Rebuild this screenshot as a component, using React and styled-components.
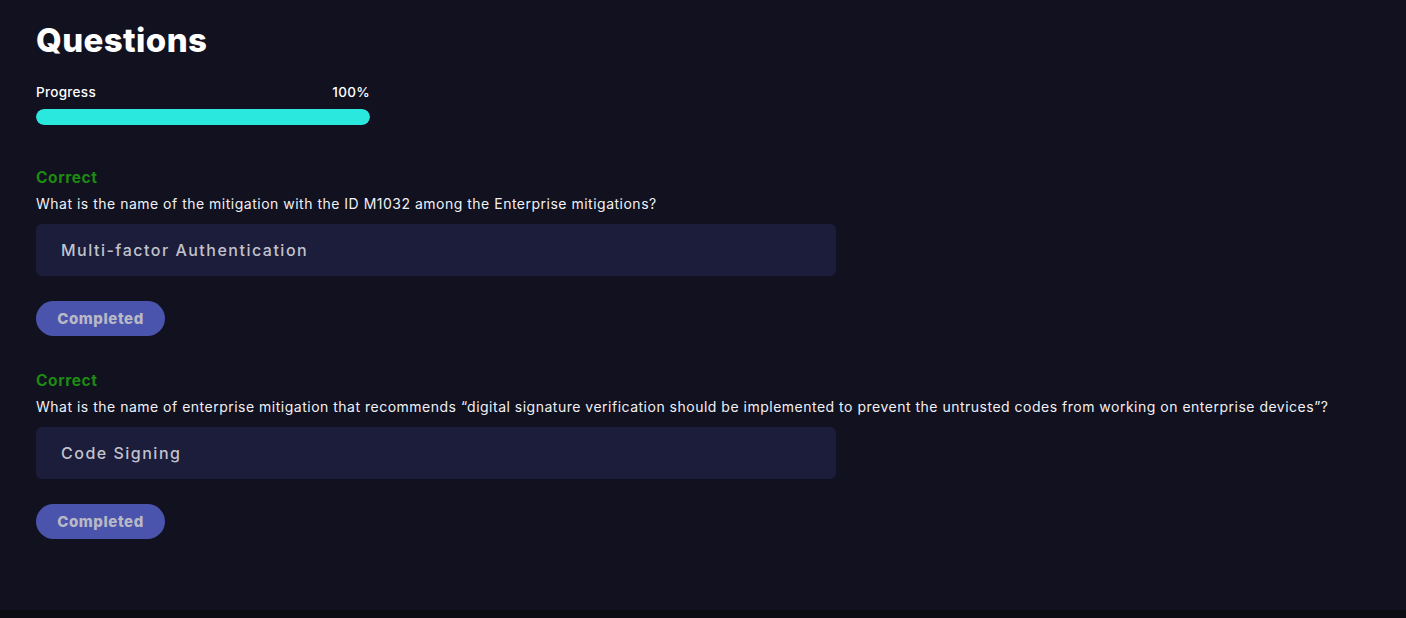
import React from "react";
import styled, { createGlobalStyle } from "styled-components";

const GlobalStyle = createGlobalStyle`
  html, body {
    margin: 0;
    padding: 0;
    background: #0c0c14;
  }
  body {
    font-family: "Inter", "DejaVu Sans", sans-serif;
  }
`;

const Page = styled.div`
  height: 610px;
  background: #11111f;
  padding: 20px 36px 0;
  box-sizing: border-box;
`;

const Title = styled.h1`
  margin: 0;
  font-size: 33px;
  font-weight: 800;
  color: #ffffff;
  line-height: 40px;
  letter-spacing: 0.4px;
`;

const ProgressBlock = styled.div`
  width: 334px;
  margin-top: 23px;
`;

const ProgressHead = styled.div`
  display: flex;
  justify-content: space-between;
  font-size: 13.5px;
  font-weight: 500;
  color: #ffffff;
  line-height: 18px;
  letter-spacing: 0.3px;
`;

const Track = styled.div`
  margin-top: 8px;
  height: 16px;
  border-radius: 8px;
  background: #2a2a40;
  overflow: hidden;
`;

const Fill = styled.div`
  height: 100%;
  background: #2ae8de;
  border-radius: 8px;
`;

const Question = styled.section`
  margin-top: ${(p) => (p.first ? "43px" : "35px")};
`;

const Status = styled.div`
  font-size: 15.5px;
  font-weight: 700;
  color: #1d8a12;
  line-height: 20px;
  letter-spacing: 0.6px;
`;

const Prompt = styled.p`
  margin: 7px 0 0;
  font-size: 14px;
  color: #f0f0f4;
  line-height: 18px;
  letter-spacing: 0.5px;
`;

const Answer = styled.div`
  margin-top: 11px;
  width: 800px;
  height: 52px;
  box-sizing: border-box;
  display: flex;
  align-items: center;
  padding-left: 25px;
  background: #1b1d3b;
  border-radius: 6px;
  font-size: 16px;
  font-weight: 500;
  letter-spacing: 1.5px;
  color: #c2c2cc;
`;

const Done = styled.button`
  margin-top: 25px;
  width: 129px;
  height: 35px;
  border: none;
  border-radius: 18px;
  background: #4a54ad;
  color: #b9b9c6;
  font-family: inherit;
  font-size: 15px;
  font-weight: 800;
  letter-spacing: 0.6px;
  padding: 0;
`;

const questions = [
  {
    text: "What is the name of the mitigation with the ID M1032 among the Enterprise mitigations?",
    answer: "Multi-factor Authentication",
  },
  {
    text: "What is the name of enterprise mitigation that recommends \u201cdigital signature verification should be implemented to prevent the untrusted codes from working on enterprise devices\u201d?",
    answer: "Code Signing",
  },
];

export default function App() {
  const progress = 100;
  return (
    <>
      <GlobalStyle />
      <Page>
        <Title>Questions</Title>
        <ProgressBlock>
          <ProgressHead>
            <span>Progress</span>
            <span>{progress}%</span>
          </ProgressHead>
          <Track>
            <Fill style={{ width: `${progress}%` }} />
          </Track>
        </ProgressBlock>
        {questions.map((q, i) => (
          <Question key={i} first={i === 0}>
            <Status>Correct</Status>
            <Prompt>{q.text}</Prompt>
            <Answer>{q.answer}</Answer>
            <Done>Completed</Done>
          </Question>
        ))}
      </Page>
    </>
  );
}
